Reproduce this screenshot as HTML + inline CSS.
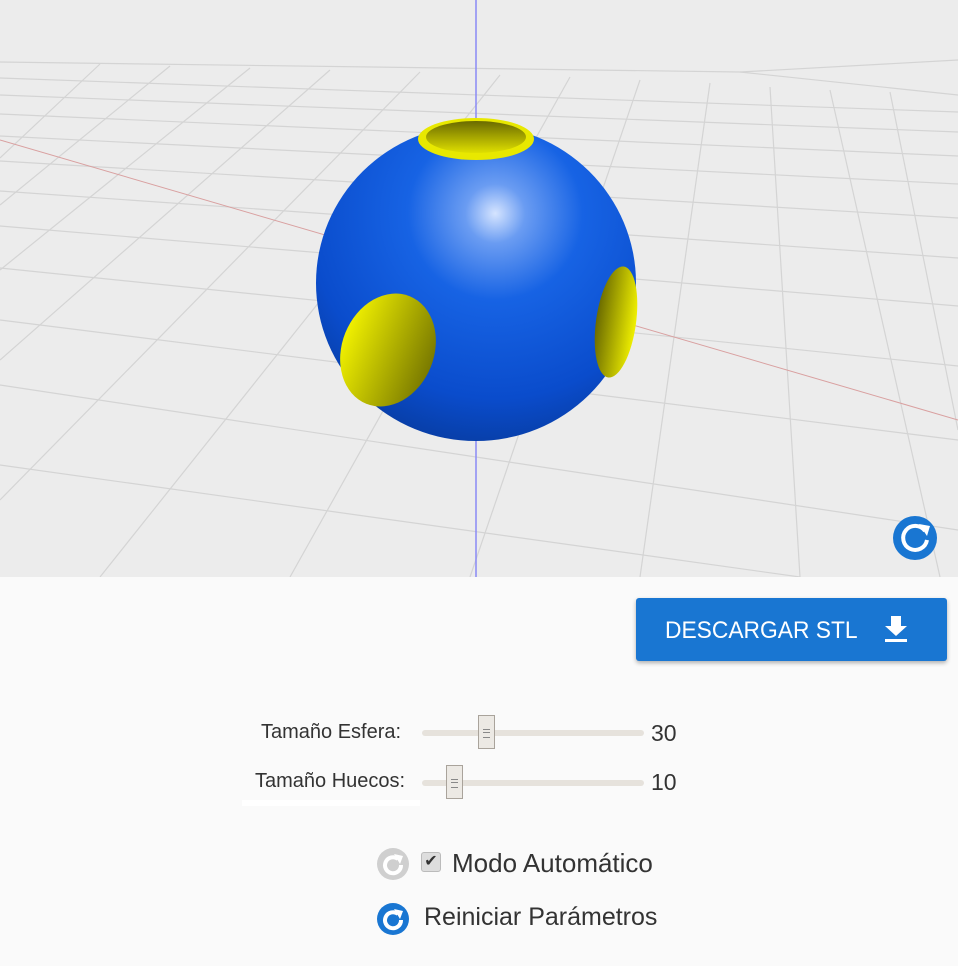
<!DOCTYPE html>
<html><head><style>
body{margin:0;width:958px;height:966px;background:#fafafa;font-family:"Liberation Sans",sans-serif;position:relative;overflow:hidden}
.lbl{position:absolute;font-size:19px;color:#333;white-space:nowrap}
.track{position:absolute;height:6px;background:#e6e2dc;border-radius:3px}
.thumb{position:absolute;width:17px;height:34px;background:#ece9e4;border:1px solid #a9a39b;box-sizing:border-box}
.thumb:after{content:"";position:absolute;left:4px;top:13px;width:7px;height:7px;border-top:1px solid #888;border-bottom:1px solid #888}
.thumb:before{content:"";position:absolute;left:4px;top:16px;width:7px;border-top:1px solid #888}
</style></head><body>
<svg width="958" height="577" style="position:absolute;left:0;top:0" viewBox="0 0 958 577">
<defs>
<radialGradient id="sg" cx="0.56" cy="0.28" r="0.78">
<stop offset="0" stop-color="#d5e4ff"/><stop offset="0.12" stop-color="#6a9cf2"/><stop offset="0.35" stop-color="#1763e4"/><stop offset="0.75" stop-color="#0a4ccc"/><stop offset="1" stop-color="#073a9c"/>
</radialGradient>
<linearGradient id="yl" x1="0" x2="1"><stop offset="0" stop-color="#f0f000"/><stop offset="1" stop-color="#7a7a00"/></linearGradient>
<linearGradient id="yr" x1="1" x2="0"><stop offset="0" stop-color="#f0f000"/><stop offset="1" stop-color="#6a6a00"/></linearGradient>
<linearGradient id="yt" x1="0" y1="0" x2="0" y2="1"><stop offset="0" stop-color="#6a6a00"/><stop offset="1" stop-color="#e0e000"/></linearGradient>
</defs>
<rect width="958" height="577" fill="#ececec"/>
<g stroke="#d4d4d4" stroke-width="1.2" fill="none">
<path d="M0 62 L740 72 L958 95"/>
<path d="M0 78 L958 112"/><path d="M0 95 L958 132"/><path d="M0 114 L958 156"/>
<path d="M0 136 L958 184"/><path d="M0 161 L958 218"/><path d="M0 191 L958 258"/>
<path d="M0 226 L958 306"/><path d="M0 268 L958 366"/><path d="M0 320 L958 440"/>
<path d="M0 385 L958 530"/><path d="M0 465 L800 577"/>
<path d="M100 577 L500 75"/><path d="M0 500 L420 72"/><path d="M0 360 L330 70"/>
<path d="M0 270 L250 68"/><path d="M0 205 L170 66"/><path d="M0 158 L100 64"/>
<path d="M290 577 L570 77"/><path d="M470 577 L640 80"/><path d="M640 577 L710 83"/>
<path d="M800 577 L770 87"/><path d="M940 577 L830 90"/><path d="M958 430 L890 92"/>
<path d="M740 72 L958 60"/>
</g>
<path d="M0 140 L958 420" stroke="#d9a0a0" stroke-width="1"/>
<line x1="476" y1="0" x2="476" y2="577" stroke="#8a8af5" stroke-width="1.5"/>
<ellipse cx="476" cy="283" rx="160" ry="158" fill="url(#sg)"/>
<ellipse cx="476" cy="139" rx="58" ry="21" fill="#e8e800"/>
<ellipse cx="476" cy="137" rx="50" ry="16" fill="url(#yt)"/>
<ellipse cx="388" cy="350" rx="46" ry="58" transform="rotate(22 388 350)" fill="url(#yl)"/>
<ellipse cx="616" cy="322" rx="20" ry="56" transform="rotate(8 616 322)" fill="url(#yr)"/>
<circle cx="915" cy="538" r="22" fill="#1976d2"/>
<path d="M925 531 A12 12 0 1 0 927 540" stroke="#fff" stroke-width="4" fill="none"/>
<path d="M919 524 L930 526 L927 536 Z" fill="#fff"/>
</svg>
<div style="position:absolute;left:636px;top:598px;width:311px;height:63px;background:#1976d2;border-radius:3px;box-shadow:0 2px 4px rgba(0,0,0,.3);color:#fff;font-size:24px;line-height:66px">
<span style="position:absolute;left:29px;transform:scaleX(0.95);transform-origin:left">DESCARGAR STL</span>
<svg style="position:absolute;left:246px;top:16px" width="30" height="30"><path d="M9 2h10v10h6L14 22 3 12h6z" fill="#fff"/><rect x="3" y="25" width="22" height="3" fill="#fff"/></svg>
</div>
<div class="lbl" style="left:261px;top:721px;font-size:20px">Tamaño Esfera:</div>
<div class="track" style="left:422px;top:730px;width:222px"></div>
<div class="thumb" style="left:478px;top:715px"></div>
<div class="lbl" style="left:651px;top:720px;font-size:23px">30</div>
<div class="lbl" style="left:255px;top:770px;font-size:20px">Tamaño Huecos:</div>
<div style="position:absolute;left:242px;top:800px;width:178px;height:6px;background:#fff"></div>
<div class="track" style="left:422px;top:780px;width:222px"></div>
<div class="thumb" style="left:446px;top:765px"></div>
<div class="lbl" style="left:651px;top:769px;font-size:23px">10</div>
<svg style="position:absolute;left:376px;top:847px" width="34" height="34"><circle cx="17" cy="17" r="16" fill="#cfcfcf"/><path d="M22 12 A8 8 0 1 0 25 18" stroke="#fff" stroke-width="4" fill="none"/><path d="M18 7 L27 9 L24 17Z" fill="#fff"/></svg>
<div style="position:absolute;left:421px;top:852px;width:20px;height:20px;background:#ddd;border:1px solid #bbb;border-radius:3px;box-sizing:border-box;font-size:16px;line-height:18px;text-align:center;color:#333">✔</div>
<div class="lbl" style="left:452px;top:848px;font-size:26px">Modo Automático</div>
<svg style="position:absolute;left:376px;top:902px" width="34" height="34"><circle cx="17" cy="17" r="16" fill="#1976d2"/><path d="M22 12 A8 8 0 1 0 25 18" stroke="#fff" stroke-width="4" fill="none"/><path d="M18 7 L27 9 L24 17Z" fill="#fff"/></svg>
<div class="lbl" style="left:424px;top:903px;font-size:25px">Reiniciar Parámetros</div>
</body></html>
